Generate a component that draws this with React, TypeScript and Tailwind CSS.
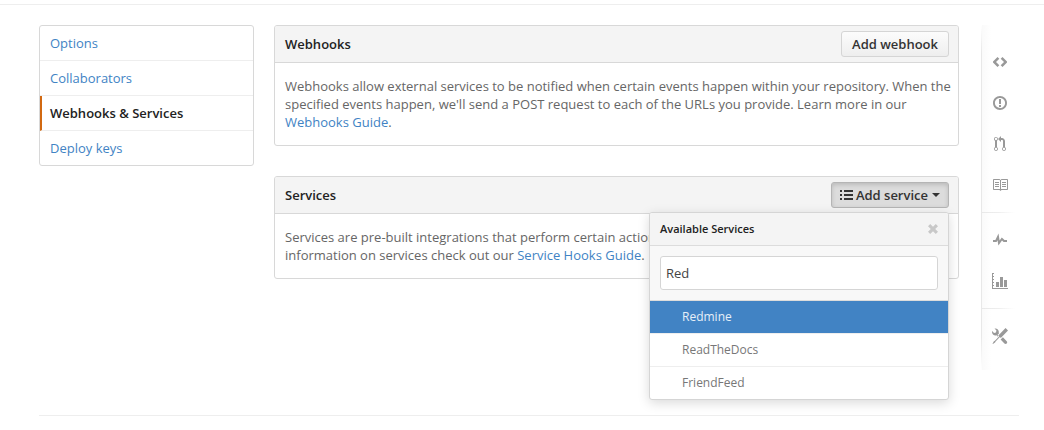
import { useId, useState } from "react";
import type { ReactNode } from "react";

const navItems = ["Options", "Collaborators", "Webhooks & Services", "Deploy keys"];
const services = ["Redmine", "ReadTheDocs", "FriendFeed"];

type IconProps = { d: string; box?: string; size?: string };

function Icon({ d, box = "0 0 16 16", size = "size-4" }: IconProps) {
  return (
    <svg viewBox={box} className={size} fill="currentColor" fillRule="evenodd" aria-hidden="true">
      <path d={d} />
    </svg>
  );
}

const toolGroups: { label: string; icon: IconProps }[][] = [
  [
    {
      label: "Code",
      icon: {
        box: "0 0 14 16",
        size: "h-4 w-3.5",
        d: "M9.500 2.900L7.700 4.700 11 8 7.700 11.300l1.800 1.800L14 8.600V7.400L9.500 2.900zM4.500 2.900L0 7.400v1.200l4.500 4.500 1.800-1.800L3 8l3.300-3.300L4.500 2.900z",
      },
    },
    {
      label: "Issues",
      icon: {
        box: "0 0 14 16",
        size: "h-4 w-3.5",
        d: "M7 2.900c2.820 0 5.100 2.280 5.100 5.100s-2.280 5.100-5.100 5.100A5.100 5.100 0 0 1 1.900 8c0-2.820 2.280-5.100 5.100-5.100zM7 1C3.140 1 0 4.140 0 8s3.140 7 7 7 7-3.140 7-7-3.140-7-7-7zm1 3H6v5h2V4zm0 6H6v2h2v-2z",
      },
    },
    {
      label: "Pull requests",
      icon: {
        box: "0 0 12 16",
        size: "h-4 w-3",
        d: "M11 11.280V5c-.03-.78-.34-1.470-.94-2.060C9.460 2.350 8.780 2.030 8 2H7V0L4 3l3 3V4h1c.27.02.48.11.69.31.21.2.3.42.31.69v6.280A1.993 1.993 0 0 0 10 15a1.993 1.993 0 0 0 1-3.720zm-1 2.920c-.66 0-1.200-.55-1.200-1.200 0-.65.55-1.200 1.200-1.200.65 0 1.200.55 1.200 1.200 0 .65-.55 1.200-1.200 1.200zM4 3c0-1.110-.89-2-2-2a1.993 1.993 0 0 0-1 3.720v6.560A1.993 1.993 0 0 0 2 15a1.993 1.993 0 0 0 1-3.720V4.720c.59-.34 1-.98 1-1.720zm-.8 10c0 .66-.55 1.200-1.200 1.200-.65 0-1.200-.55-1.200-1.200 0-.65.55-1.200 1.200-1.200.65 0 1.200.55 1.200 1.200zM2 4.200C1.340 4.200.8 3.650.8 3c0-.65.55-1.200 1.200-1.200.65 0 1.200.55 1.200 1.200 0 .65-.55 1.200-1.200 1.200z",
      },
    },
    {
      label: "Wiki",
      icon: {
        d: "M3 5h4v1H3V5zm0 3h4V7H3v1zm0 2h4V9H3v1zm11-5h-4v1h4V5zm0 2h-4v1h4V7zm0 2h-4v1h4V9zm2-6v9c0 .55-.45 1-1 1H9.500l-1 1-1-1H2c-.55 0-1-.45-1-1V3c0-.55.45-1 1-1h5.500l1 1 1-1H15c.55 0 1 .45 1 1zm-8 .5L7.500 3H2v9h6V3.500zm7-.5H9.500l-.5.5V12h6V3z",
      },
    },
  ],
  [
    {
      label: "Pulse",
      icon: {
        box: "0 0 14 16",
        size: "h-4 w-3.5",
        d: "M11.500 8L8.800 5.400 6.600 8.500 5.500 1.600 2.380 8H0v2h3.600l.9-1.800.9 5.400L9 8.500l1.600 1.500H14V8h-2.500z",
      },
    },
    {
      label: "Graphs",
      icon: {
        d: "M16 15v1H0V0h2v1H1v2h1v1H1v2h1v1H1v2h1v1H1v2h1v1H1v2h15zM7 14H4V9h3v5zm4 0H8V4h3v10zm4 0h-3V7h3v7z",
      },
    },
  ],
  [
    {
      label: "Settings",
      icon: {
        d: "M4.480 7.270c.26.26 1.280 1.330 1.280 1.330l.56-.58-.88-.91 1.690-1.800s-.76-.74-.43-.45c.32-1.190.03-2.510-.87-3.440C4.930.5 3.660.2 2.520.51l1.930 2-.51 1.960-1.890.52-1.930-1.990C-.19 4.170.1 5.480 1 6.400c.94.98 2.290 1.260 3.480.87zm6.440 1.940l-2.330 2.300 3.840 3.980c.31.33.73.49 1.140.49.41 0 .82-.16 1.140-.49.63-.65.63-1.700 0-2.350l-3.790-3.930zM16 2.530L13.550 0 6.330 7.460l.88.91-4.310 4.460-.99.53-1.390 2.270.35.37 2.200-1.440.51-1.020L7.900 9.080l.88.91L16 2.530z",
      },
    },
  ],
];

function Panel({ title, action, children }: { title: string; action: ReactNode; children: ReactNode }) {
  return (
    <section className="rounded-[3px] border border-[#d8d8d8]">
      <header className="flex h-[37px] items-center justify-between rounded-t-[2px] border-b border-[#d8d8d8] bg-[#f4f4f4] pr-[9px] pl-2.5">
        <h2 className="font-semibold text-[#222]">{title}</h2>
        {action}
      </header>
      <p className="py-3.5 pr-1 pl-2.5 text-[#666]">{children}</p>
    </section>
  );
}

function ServiceMenu({ onClose }: { onClose: () => void }) {
  const id = useId();
  const [query, setQuery] = useState("Red");
  return (
    <div className="absolute top-full right-0 z-10 mt-1 w-[300px] overflow-hidden rounded-[3px] border border-[#d5d5d5] bg-white shadow-[0_3px_12px_rgba(0,0,0,0.15)]">
      <div className="flex h-[33px] items-center justify-between border-b border-[#dcdcdc] bg-[#f4f4f4] px-2.5">
        <label htmlFor={id} className="text-[11px] font-semibold text-[#222]">
          Available Services
        </label>
        <button type="button" aria-label="Close" onClick={onClose} className="text-[#c8c8c8]">
          <Icon
            size="size-2.5"
            box="0 0 10 10"
            d="M2.200 0L5 2.800 7.800 0 10 2.200 7.200 5 10 7.800 7.800 10 5 7.200 2.200 10 0 7.800 2.800 5 0 2.200z"
          />
        </button>
      </div>
      <div className="border-b border-[#dcdcdc] bg-[#f8f8f8] p-2.5">
        <input
          id={id}
          value={query}
          onChange={(e) => setQuery(e.target.value)}
          className="block h-[34px] w-full rounded-[3px] border border-[#d5d5d5] bg-white px-[5px] text-[#444] outline-none"
        />
      </div>
      <ul className="divide-y divide-[#eee] text-xs">
        {services.map((name, i) => (
          <li key={name}>
            <button
              type="button"
              className={
                i === 0
                  ? "block h-8 w-full bg-[#4183c4] pl-8 text-left text-[#e6eff8]"
                  : "block h-8 w-full pl-8 text-left text-[#777]"
              }
            >
              {name}
            </button>
          </li>
        ))}
      </ul>
    </div>
  );
}

export default function App() {
  const [open, setOpen] = useState(true);
  return (
    <div className="bg-white pt-1 font-['Open_Sans',sans-serif] text-[13px] leading-[18px]">
      <div className="border-t border-[#eee] pt-5 pr-[25px] pl-[39px]">
        <div className="flex items-start border-b border-[#eee] pb-[45px]">
          <nav className="mr-5 w-[215px] shrink-0 divide-y divide-[#eee] overflow-hidden rounded-[3px] border border-[#d8d8d8]">
            {navItems.map((item) =>
              item === "Webhooks & Services" ? (
                <a
                  key={item}
                  href="#"
                  aria-current="page"
                  className="block border-l-2 border-l-[#d26911] py-2 pl-2 font-semibold text-[#222]"
                >
                  {item}
                </a>
              ) : (
                <a key={item} href="#" className="block px-2.5 py-2 text-[#4183c4]">
                  {item}
                </a>
              ),
            )}
          </nav>

          <main className="flex min-w-0 flex-1 flex-col gap-[30px]">
            <Panel
              title="Webhooks"
              action={
                <button
                  type="button"
                  className="h-[26px] rounded-[3px] border border-[#d5d5d5] bg-linear-to-b from-[#fcfcfc] to-[#eee] px-2.5 font-semibold text-[#333]"
                >
                  Add webhook
                </button>
              }
            >
              Webhooks allow external services to be notified when certain events happen within your repository. When
              the specified events happen, we'll send a POST request to each of the URLs you provide. Learn more in our{" "}
              <a href="#" className="text-[#4183c4]">
                Webhooks Guide
              </a>
              .
            </Panel>

            <Panel
              title="Services"
              action={
                <div className="relative">
                  <button
                    type="button"
                    aria-expanded={open}
                    onClick={() => setOpen(!open)}
                    className="flex h-[26px] items-center rounded-[3px] border border-[#b5b5b5] bg-[#dcdcdc] px-2 font-semibold text-[#333] shadow-[inset_0_2px_4px_rgba(0,0,0,0.15)]"
                  >
                    <Icon
                      size="h-3 w-[13px]"
                      box="0 0 13 12"
                      d="M0 1h2v2H0zM0 5h2v2H0zM0 9h2v2H0zM4 1h9v2H4zM4 5h9v2H4zM4 9h9v2H4z"
                    />
                    <span className="mr-1 ml-[3px]">Add service</span>
                    <Icon size="h-1 w-2" box="0 0 8 4" d="M0 0h8L4 4z" />
                  </button>
                  {open && <ServiceMenu onClose={() => setOpen(false)} />}
                </div>
              }
            >
              Services are pre-built integrations that perform certain actions when events occur on GitHub. For more
              information on services check out our{" "}
              <a href="#" className="text-[#4183c4]">
                Service Hooks Guide
              </a>
              .
            </Panel>
          </main>

          <aside className="ml-[22px] flex w-[38px] shrink-0">
            <div className="w-px bg-[linear-gradient(to_bottom,transparent,#e8e8e8_8%,#e8e8e8_90%,transparent)]" />
            <div className="flex-1 bg-linear-to-r from-[#fafafa] to-white to-25% pt-2.5 pb-[7px]">
              {toolGroups.map((group, i) => (
                <div key={i}>
                  {i > 0 && <div className="mr-1 h-px bg-linear-to-r from-[#e8e8e8] via-[#eee] to-transparent" />}
                  <ul className="pt-1.5 pr-0.5 pb-[7px]">
                    {group.map(({ label, icon }) => (
                      <li key={label}>
                        <a href="#" aria-label={label} className="flex h-[41px] items-center justify-center text-[#999]">
                          <Icon {...icon} />
                        </a>
                      </li>
                    ))}
                  </ul>
                </div>
              ))}
            </div>
          </aside>
        </div>
      </div>
    </div>
  );
}
